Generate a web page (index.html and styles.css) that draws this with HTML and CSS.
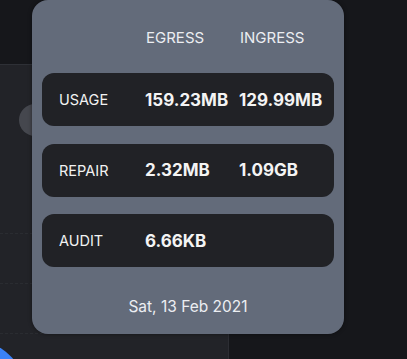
FILE: index.html
```html
<!DOCTYPE html>
<html lang="en">

<head>
  <meta charset="UTF-8" />
  <meta name="viewport" content="width=device-width, initial-scale=1.0" />
  <title>Bandwidth Tooltip</title>
  <link rel="stylesheet" href="styles.css">
</head>

<body>
  <div class="page">
    <div class="side-panel">
      <div class="top-bar"></div>
      <div class="panel-body">
        <div class="avatar"></div>
        <div class="grid-lines">
          <div class="grid-line"></div>
          <div class="grid-line"></div>
          <div class="grid-line"></div>
        </div>
        <div class="chart-disc"></div>
      </div>
    </div>
    <div class="main-area"></div>
  </div>

  <div class="tooltip">
    <div class="tooltip-head">
      <span></span>
      <span>EGRESS</span>
      <span>INGRESS</span>
    </div>

    <div class="tooltip-rows">
      <div class="tooltip-row">
        <span class="row-label">USAGE</span>
        <span class="row-value">159.23MB</span>
        <span class="row-value">129.99MB</span>
      </div>
      <div class="tooltip-row">
        <span class="row-label">REPAIR</span>
        <span class="row-value">2.32MB</span>
        <span class="row-value">1.09GB</span>
      </div>
      <div class="tooltip-row">
        <span class="row-label">AUDIT</span>
        <span class="row-value">6.66KB</span>
        <span class="row-value"></span>
      </div>
    </div>

    <div class="tooltip-date">Sat, 13 Feb 2021</div>
  </div>
</body>

</html>
```

FILE: styles.css
```css
body {
  margin: 0;
  padding: 0;
  background-color: #16171b;
  font-family: 'Inter', 'Noto Sans', sans-serif;
  color: #fff;
  overflow: hidden;
}

.page {
  display: flex;
  height: 359px;
}

.side-panel {
  width: 228px;
  display: flex;
  flex-direction: column;
  border-right: 1px solid #2c2d33;
}

.top-bar {
  height: 64px;
  background-color: #16171b;
  border-bottom: 1px solid #2e3036;
}

.panel-body {
  flex: 1;
  position: relative;
  background-color: #222328;
  overflow: hidden;
}

.avatar {
  position: absolute;
  left: 19px;
  top: 39px;
  width: 32px;
  height: 32px;
  border-radius: 50%;
  background-color: #45474e;
}

.grid-lines {
  display: flex;
  flex-direction: column;
  gap: 49px;
  padding-top: 168px;
}

.grid-line {
  border-top: 1px dashed #2a2c31;
}

.chart-disc {
  position: absolute;
  left: -102px;
  top: 272px;
  width: 132px;
  height: 132px;
  border-radius: 50%;
  background-color: #3b82f6;
}

.main-area {
  flex: 1;
}

.tooltip {
  position: absolute;
  left: 32px;
  top: 0;
  width: 292px;
  height: 334px;
  padding: 0 10px;
  background-color: #636b7a;
  border-radius: 16px;
  box-shadow: 0 0 4px rgba(0, 0, 0, 0.45);
}

.tooltip-head,
.tooltip-row {
  display: grid;
  grid-template-columns: 86px 94px 1fr;
  padding-left: 17px;
}

.tooltip-head {
  box-sizing: border-box;
  height: 73px;
  padding-top: 29px;
  line-height: 18px;
  font-size: 15px;
  color: #eceef2;
}

.tooltip-head span:nth-child(2) {
  padding-left: 1px;
}

.tooltip-head span:nth-child(3) {
  padding-left: 1px;
}

.tooltip-rows {
  display: flex;
  flex-direction: column;
  gap: 17.5px;
}

.tooltip-row {
  height: 53px;
  align-items: center;
  background-color: #212226;
  border-radius: 12px;
}

.row-label {
  font-size: 14.5px;
  color: #f2f2f2;
}

.row-value {
  font-size: 17px;
  font-weight: 700;
  color: #f4f4f4;
}

.tooltip-date {
  padding-top: 31px;
  line-height: 18px;
  text-align: center;
  font-size: 15.5px;
  color: #eceef2;
}
```
